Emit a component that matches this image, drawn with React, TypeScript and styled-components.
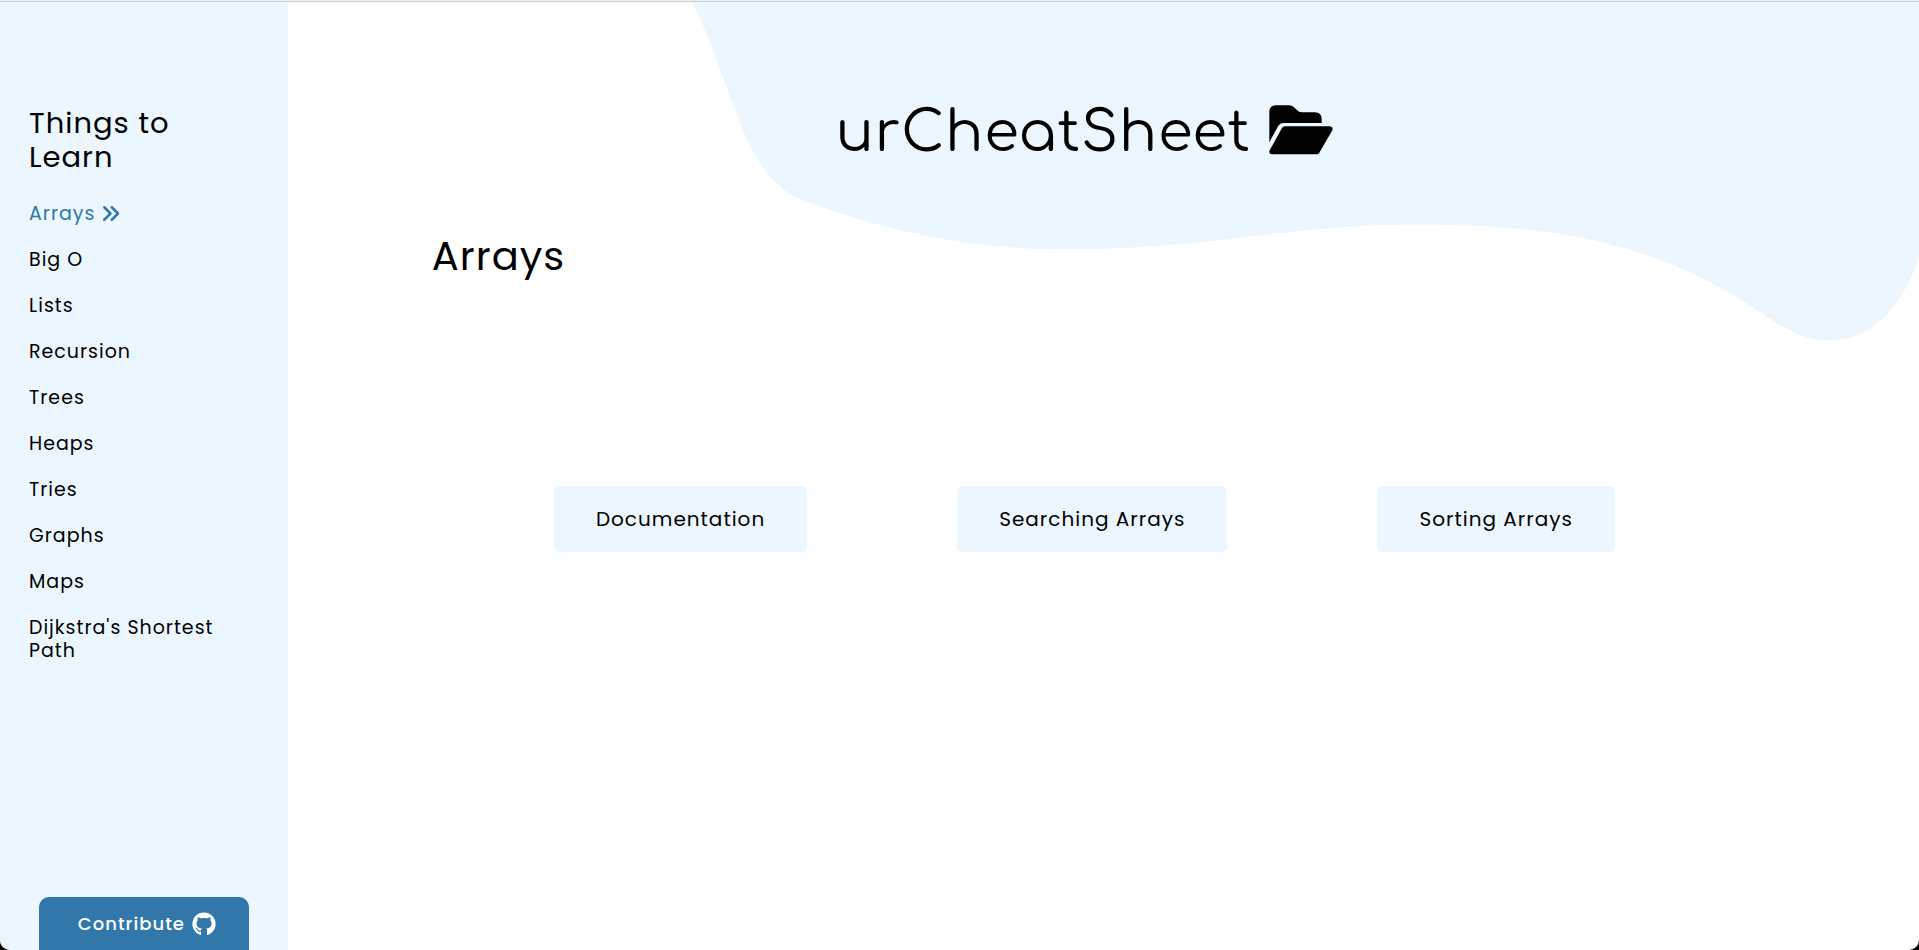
import React from "react";
import styled, { createGlobalStyle } from "styled-components";
import { FaGithub } from "react-icons/fa";
import { HiChevronDoubleRight } from "react-icons/hi";

const tint = "#ebf6ff";
const accent = "#3277a9";

const GlobalStyle = createGlobalStyle`
  *, *::before, *::after { box-sizing: border-box; }
  body {
    margin: 0;
    border-top: 1px solid #eeefef;
    background: #000;
    color: #000;
    font-family: Poppins, Inter, "Liberation Sans", sans-serif;
    letter-spacing: 1px;
  }
`;

const Page = styled.div`
  position: relative;
  display: flex;
  min-height: calc(100vh - 1px);
  overflow: hidden;
  background: #fff;
  border-top: 1px solid #cbd0d3;
  border-radius: 0 0 10px 10px;
`;

const Wave = styled.svg`
  position: absolute;
  top: 0;
  right: 0;
  width: 64%;
  height: auto;
`;

const Sidebar = styled.aside`
  display: flex;
  flex-direction: column;
  width: 15%;
  min-width: 240px;
  padding: 104px 0 0;
  background: ${tint};
`;

const SidebarTitle = styled.h2`
  margin: 0 48px 28px 29px;
  font-size: 29px;
  line-height: 34px;
  font-weight: 400;
`;

const TopicList = styled.ul`
  display: flex;
  flex-direction: column;
  gap: 23px;
  margin: 0 48px 0 29px;
  padding: 0;
  list-style: none;
`;

const TopicLink = styled.a<{ $active?: boolean }>`
  display: flex;
  align-items: center;
  gap: 3px;
  color: ${(p) => (p.$active ? accent : "#000")};
  font-size: 19px;
  line-height: 23px;
  text-decoration: none;

  svg {
    margin: -2px 0;
  }
`;

const Contribute = styled.a`
  display: flex;
  align-items: center;
  justify-content: center;
  gap: 7px;
  height: 53px;
  margin: auto 39px 0;
  padding-left: 6px;
  border-radius: 10px 10px 0 0;
  background: ${accent};
  color: #fff;
  font-size: 18px;
  font-weight: 500;
  text-decoration: none;
`;

const Main = styled.main`
  position: relative;
  flex: 1;
  display: flex;
  flex-direction: column;
  padding: 97px 144px 0;
`;

const Brand = styled.h1`
  display: flex;
  align-items: center;
  justify-content: center;
  gap: 18px;
  margin: 0 38px 0 0;
  font-family: Comfortaa, Lato, "Liberation Sans", sans-serif;
  font-size: 56px;
  line-height: 68px;
  font-weight: 400;
`;

const FolderIcon = styled.svg`
  width: 64px;
  height: 50px;
  margin-bottom: 6px;
`;

const TopicTitle = styled.h2`
  margin: 63px 0 0;
  font-size: 40px;
  line-height: 52px;
  font-weight: 400;
`;

const Actions = styled.div`
  display: flex;
  flex-wrap: wrap;
  justify-content: center;
  gap: 150px;
  margin: 204px 38px 0 0;
`;

const ActionButton = styled.button`
  height: 66px;
  padding: 0 42px;
  border: 0;
  border-radius: 5px;
  background: ${tint};
  color: #000;
  font: inherit;
  font-size: 20px;
  letter-spacing: inherit;
  cursor: pointer;
`;

const topics = [
  "Arrays",
  "Big O",
  "Lists",
  "Recursion",
  "Trees",
  "Heaps",
  "Tries",
  "Graphs",
  "Maps",
  "Dijkstra's Shortest Path",
];

const actions = ["Documentation", "Searching Arrays", "Sorting Arrays"];

export default function App() {
  const current = "Arrays";
  return (
    <>
      <GlobalStyle />
      <Page>
        <Wave viewBox="693 2 1226 340" aria-hidden="true">
          <path
            fill={tint}
            d="M694 2C707 26 723 72 736 107C751 148 769 185 803 199C891 233 978 249 1067 249C1210 249 1290 224 1417 224C1550 224 1650 240 1752 306C1779 324 1800 340 1830 340C1872 340 1903 304 1919 257V2Z"
          />
        </Wave>
        <Sidebar>
          <SidebarTitle>Things to Learn</SidebarTitle>
          <nav>
            <TopicList>
              {topics.map((topic) => (
                <li key={topic}>
                  <TopicLink href="#" $active={topic === current}>
                    {topic}
                    {topic === current && <HiChevronDoubleRight size={25} />}
                  </TopicLink>
                </li>
              ))}
            </TopicList>
          </nav>
          <Contribute href="#">
            Contribute <FaGithub size={24} />
          </Contribute>
        </Sidebar>
        <Main>
          <Brand>
            urCheatSheet
            <FolderIcon viewBox="0 0 192 150" aria-hidden="true">
              <path d="M1 112V21Q1 1 22 1H60Q69 1 75 7L86 17Q91 22 99 22H137Q158 22 158 42V54H42Q33 54 28 62Z" />
              <path d="M48 64H183Q193 65 190 76L151 143Q148 148 143 148H9Q0 147 1 138L39 69Q42 64 48 64Z" />
            </FolderIcon>
          </Brand>
          <TopicTitle>{current}</TopicTitle>
          <Actions>
            {actions.map((label) => (
              <ActionButton key={label} type="button">
                {label}
              </ActionButton>
            ))}
          </Actions>
        </Main>
      </Page>
    </>
  );
}
